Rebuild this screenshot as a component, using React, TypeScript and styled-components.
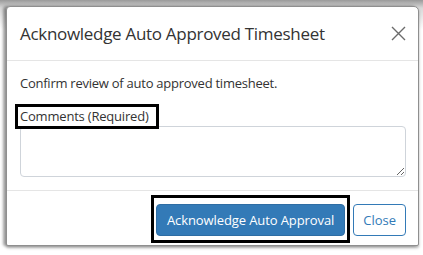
import React, { useState } from "react";
import styled, { createGlobalStyle } from "styled-components";

const GlobalStyle = createGlobalStyle`
    html, body {
        margin: 0;
        padding: 0;
        background: #ffffff;
    }
    body {
        font-family: "Open Sans", "Noto Sans", "Liberation Sans", sans-serif;
    }
`;

const App = () => {
    const [comment, setComment] = useState(""); // 코멘트 상태

    return (
        <Page>
            <GlobalStyle />
            <Modal>
                <Header>
                    <Title>Acknowledge Auto Approved Timesheet</Title>
                    <CloseX aria-label="close">
                        <svg width="15" height="15" viewBox="0 0 15 15">
                            <path d="M1 1 L14 14 M14 1 L1 14" stroke="#6b6b6b" strokeWidth="1.4" fill="none" />
                        </svg>
                    </CloseX>
                </Header>
                <Body>
                    <Intro>Confirm review of auto approved timesheet.</Intro>
                    <Label $marked>Comments (Required)</Label>
                    <TextArea value={comment} onChange={(e) => setComment(e.target.value)} />
                </Body>
                <Footer>
                    <Marked>
                        <PrimaryButton>Acknowledge Auto Approval</PrimaryButton>
                    </Marked>
                    <OutlineButton>Close</OutlineButton>
                </Footer>
            </Modal>
        </Page>
    );
};

const Page = styled.div`
    width: 423px;
    height: 255px;
    box-sizing: border-box;
    padding: 6px 4px 9px 6px;
    background: linear-gradient(#9a9a9a, #d8d8d8 8px, #ffffff 30px);
`;

const Modal = styled.div`
    width: 413px;
    height: 240px;
    box-sizing: border-box;
    background: #ffffff;
    border: 1px solid #8f8f8f;
    border-radius: 4px 5px 2px 2px;
    box-shadow: -3px 0 3px rgba(0, 0, 0, 0.35), 0 2px 3px rgba(0, 0, 0, 0.3);
    display: flex;
    flex-direction: column;
`;

const Header = styled.div`
    height: 54px;
    box-sizing: border-box;
    display: flex;
    align-items: center;
    justify-content: space-between;
    padding: 0 12px 0 13px;
    border-bottom: 1px solid #e5e5e5;
`;

const Title = styled.div`
    font-size: 17px;
    color: #333333;
    letter-spacing: -0.3px;
`;

const CloseX = styled.button`
    background: none;
    border: none;
    padding: 0;
    width: 15px;
    height: 15px;
    display: flex;
    cursor: pointer;
`;

const Body = styled.div`
    padding: 13px 12px 0 13px;
    display: flex;
    flex-direction: column;
    align-items: flex-start;
    flex: 1;
`;

const Intro = styled.div`
    font-size: 13px;
    color: #333333;
    line-height: 18px;
    letter-spacing: -0.25px;
`;

const Label = styled.div<{ $marked?: boolean }>`
    position: relative;
    z-index: 1;
    margin-top: 12px;
    margin-left: -5px;
    padding: 0 7px 0 2px;
    font-size: 13px;
    line-height: 19px;
    letter-spacing: -0.2px;
    color: #333333;
    background: #ffffff;
    border: ${(p) => (p.$marked ? "3px solid #000000" : "none")};
`;

const TextArea = styled.textarea`
    margin-top: -3px;
    width: 100%;
    height: 51px;
    box-sizing: border-box;
    border: 1px solid #cfd4da;
    border-radius: 4px;
    resize: vertical;
    font-family: inherit;
`;

const Footer = styled.div`
    height: 55px;
    box-sizing: border-box;
    border-top: 1px solid #e5e5e5;
    display: flex;
    align-items: flex-start;
    justify-content: flex-end;
    gap: 3px;
    padding: 4px 12px 0 0;
`;

const Marked = styled.div`
    border: 3px solid #000000;
    padding: 6px 2px 4px 2px;
`;

const PrimaryButton = styled.button`
    display: block;
    height: 32px;
    padding: 0 10px;
    background: #337ab7;
    color: #ffffff;
    border: 1px solid #2e6da4;
    border-radius: 4px;
    font-family: inherit;
    font-size: 13px;
    letter-spacing: -0.1px;
    cursor: pointer;
`;

const OutlineButton = styled.button`
    margin-top: 9px;
    height: 32px;
    padding: 0 9px;
    background: #ffffff;
    color: #337ab7;
    border: 1px solid #337ab7;
    border-radius: 4px;
    font-family: inherit;
    font-size: 13px;
    cursor: pointer;
`;

export default App;
